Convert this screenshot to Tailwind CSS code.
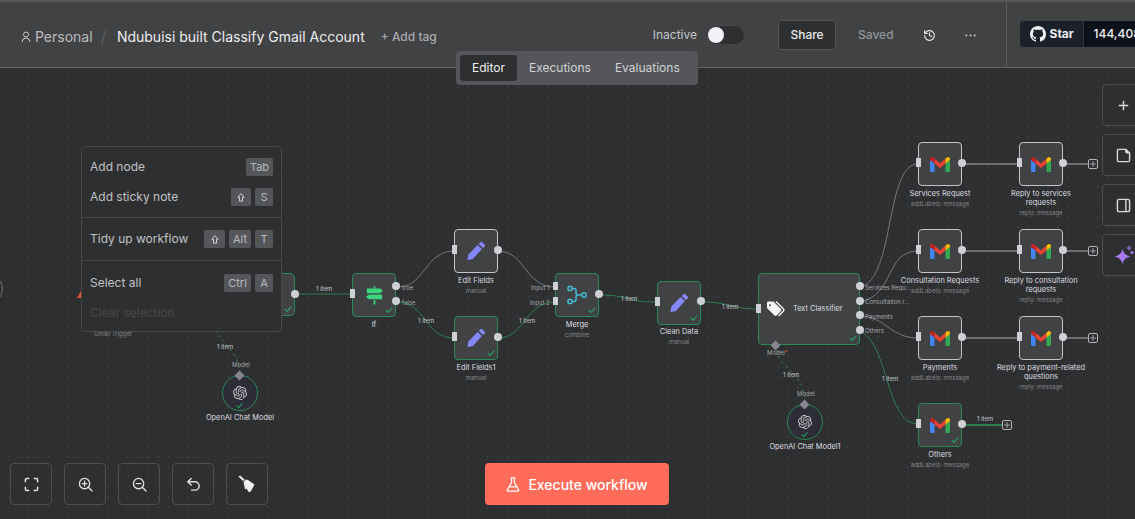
<!DOCTYPE html>
<html>
<head>
<meta charset="utf-8">
<script src="https://cdn.jsdelivr.net/npm/@tailwindcss/browser@4"></script>
</head>
<body class="m-0 overflow-hidden bg-[#2e2f30] font-['Inter','Liberation_Sans',sans-serif]">
<div class="relative w-[1135px] h-[519px] overflow-hidden flex flex-col">

<header class="h-[68px] shrink-0 bg-[#414244] border-t-2 border-t-[#575859] border-b border-b-[#626365] flex items-center pl-[21px] pt-[4px] text-[#c8cacd] whitespace-nowrap overflow-hidden">
  <svg class="w-[10px] h-[12px] mr-[4px] shrink-0" viewBox="0 0 20 24" fill="none" stroke="#c4c6c9" stroke-width="2"><circle cx="10" cy="7" r="5"/><path d="M2 22a8 8 0 0 1 16 0"/></svg>
  <span class="text-[14px] text-[#b9bbbf] shrink-0">Personal</span>
  <span class="text-[18px] text-[#5c5d60] ml-[8px] mr-[10px] font-light shrink-0">/</span>
  <span class="text-[14px] text-[#eceef0] shrink-0">Ndubuisi built Classify Gmail Account</span>
  <span class="text-[12px] text-[#a9abb0] font-medium ml-[16px] shrink-0">+ Add tag</span>
  <span class="text-[12px] text-[#c4c6c9] ml-[216px] -mt-[3px] shrink-0">Inactive</span>
  <div class="ml-[10px] -mt-[3px] w-[38px] h-[20px] rounded-full bg-[#2e2f30] border border-[#45464a] relative shrink-0"><div class="absolute left-[0px] top-[1px] w-[16px] h-[16px] rounded-full bg-[#f1f1f8]"></div></div>
  <div class="ml-[33px] -mt-[3px] w-[58px] h-[30px] rounded-[4px] bg-[#2e2f30] border border-[#55565a] flex items-center justify-center text-[12px] font-medium text-[#e8e9eb] shrink-0">Share</div>
  <span class="ml-[22px] -mt-[3px] text-[12px] font-medium text-[#92949a] shrink-0">Saved</span>
  <svg class="ml-[29px] -mt-[3px] w-[13px] h-[13px] shrink-0" viewBox="0 0 24 24" fill="none" stroke="#e3e4e6" stroke-width="2.2" stroke-linecap="round" stroke-linejoin="round"><path d="M3 12a9 9 0 1 0 3-6.7L3 8"/><path d="M3 3v5h5"/><path d="M12 7v5l4 2"/></svg>
  <svg class="ml-[29px] -mt-[3px] w-[11px] h-[11px] shrink-0" viewBox="0 0 12 12" fill="#c8cacd"><circle cx="1.5" cy="6" r="1.1"/><circle cx="6" cy="6" r="1.1"/><circle cx="10.5" cy="6" r="1.1"/></svg>
  <div class="ml-[30px] w-px self-stretch -mt-[4px] bg-[#5c5d60] shrink-0"></div>
  <div class="ml-[13px] flex h-[26px] rounded-[3px] overflow-hidden text-[12px] font-bold text-[#f0f1f3] -mt-[5px] shrink-0">
    <div class="w-[64px] bg-[#1a212b] flex items-center pl-[10px] gap-[4px] border-r border-[#30363d]">
      <svg class="w-[16px] h-[16px] shrink-0" viewBox="0 0 16 16" fill="#f0f1f3"><path d="M8 0C3.58 0 0 3.58 0 8c0 3.54 2.29 6.53 5.47 7.59.4.07.55-.17.55-.38 0-.19-.01-.82-.01-1.49-2.01.37-2.53-.49-2.69-.94-.09-.23-.48-.94-.82-1.13-.28-.15-.68-.52-.01-.53.63-.01 1.08.58 1.23.82.72 1.21 1.87.87 2.33.66.07-.52.28-.87.51-1.07-1.78-.2-3.64-.89-3.64-3.95 0-.87.31-1.59.82-2.15-.08-.2-.36-1.02.08-2.12 0 0 .67-.21 2.2.82.64-.18 1.32-.27 2-.27s1.36.09 2 .27c1.53-1.04 2.2-.82 2.2-.82.44 1.1.16 1.92.08 2.12.51.56.82 1.27.82 2.15 0 3.07-1.87 3.75-3.65 3.95.29.25.54.73.54 1.48 0 1.07-.01 1.93-.01 2.2 0 .21.15.46.55.38A8.01 8.01 0 0 0 16 8c0-4.42-3.58-8-8-8z"/></svg>Star
    </div>
    <div class="w-[70px] bg-[#0d1119] flex items-center pl-[10px] font-medium">144,408</div>
  </div>
</header>

<!-- canvas -->
<main class="relative flex-1 bg-[#2e2f30] bg-[radial-gradient(circle,#46474a_0.6px,transparent_0.8px)] bg-[length:10px_10px] bg-[position:3px_4px]">

  <!-- tab switcher -->
  <div class="absolute left-[456px] top-[-17px] h-[34px] w-[242px] rounded-[4px] bg-[#55565a] flex items-center pl-[4px] text-[12px] text-[#d0d2d6] z-20">
    <div class="w-[57px] h-[26px] rounded-[4px] bg-[#2e2f30] text-[#f0f1f3] flex items-center justify-center">Editor</div>
    <span class="ml-[12px]">Executions</span>
    <span class="ml-[24px]">Evaluations</span>
  </div>

  <!-- connections -->
  <svg class="absolute left-0 top-0" width="1135" height="451" viewBox="0 68 1135 451" fill="none">
    <path d="M0 281C3 285 3 293 0 297" stroke="#77787b"/>
    <g stroke="#2f7d50" stroke-width="1">
      <path d="M295 294H352"/>
      <path d="M398 302C425 302 425 338 454 338"/>
      <path d="M498 338C525 338 525 302 555 302"/>
      <path d="M599 295C630 295 625 302 657 302"/>
      <path d="M701 302C730 302 730 309 758 309"/>
      <path d="M860 331C890 345 885 424 918 424"/>
      <path d="M776 344C776 370 805 370 805 402" stroke-dasharray="3 3"/>
      <path d="M215 330C225 345 240 355 240 375" stroke-dasharray="3 3"/>
      <path d="M961 425H1002" stroke-width="2"/>
    </g>
    <g stroke="#77787b" stroke-width="1">
      <path d="M398 287C425 287 425 251 454 251"/>
      <path d="M498 251C525 251 525 287 555 287"/>
      <path d="M860 287C895 280 885 164 918 164"/>
      <path d="M860 302C895 295 885 251 918 251"/>
      <path d="M860 316C885 316 890 338 918 338"/>
    </g>
    <g stroke="#6d6e71" stroke-width="2">
      <path d="M961 164H1019"/><path d="M961 251H1019"/><path d="M961 338H1019"/>
      <path d="M1062 164H1088"/><path d="M1062 251H1088"/><path d="M1062 338H1088"/>
    </g>
  </svg>

  <!-- trigger remains -->
  <div class="absolute left-[265px] top-[205px] w-[30px] h-[43px] rounded-r-[5px] bg-[#414244] border-[1.5px] border-l-0 border-[#2a8a57]">
    <svg class="absolute right-[2px] bottom-[2px] w-[8px] h-[8px]" viewBox="0 0 10 10" fill="none" stroke="#2a9a5f" stroke-width="1.5"><path d="M1 5l3 3 5-6"/></svg>
  </div>
  <div class="absolute left-[291px] top-[222px] w-[8px] h-[8px] rounded-full bg-[#cfd0d6]"></div>
  <svg class="absolute left-[77px] top-[221px] w-[5px] h-[9px]" viewBox="0 0 5 9" fill="#e0533f"><path d="M5 0v9H0z"/></svg>
  <div class="absolute left-[94px] top-[261px] text-[6px] text-[#85878b]">Gmail Trigger</div>

  <!-- edge labels -->
  <div class="text-[6px] text-[#c4c6c9]">
    <span class="absolute left-[316px] top-[216px]">1 item</span>
    <span class="absolute left-[418px] top-[248px]">1 item</span>
    <span class="absolute left-[519px] top-[248px]">1 item</span>
    <span class="absolute left-[621px] top-[226px]">1 item</span>
    <span class="absolute left-[722px] top-[234px]">1 item</span>
    <span class="absolute left-[217px] top-[274px]">1 item</span>
    <span class="absolute left-[783px] top-[302px]">1 item</span>
    <span class="absolute left-[882px] top-[306px]">1 item</span>
    <span class="absolute left-[977px] top-[346px]">1 item</span>
    <span class="absolute left-[402px] top-[215px] text-[#a5a7ab]">true</span>
    <span class="absolute left-[402px] top-[230px] text-[#a5a7ab]">false</span>
    <span class="absolute left-[531px] top-[215px] text-[#a5a7ab]">Input 1</span>
    <span class="absolute left-[530px] top-[230px] text-[#a5a7ab]">Input 2</span>
    <span class="absolute left-[865px] top-[215px] text-[#a5a7ab]">Services Requ...</span>
    <span class="absolute left-[865px] top-[229px] text-[#a5a7ab]">Consultation r...</span>
    <span class="absolute left-[865px] top-[244px] text-[#a5a7ab]">Payments</span>
    <span class="absolute left-[865px] top-[258px] text-[#a5a7ab]">Others</span>
    <span class="absolute left-[767px] top-[280px] text-[#a5a7ab]">Model<span class="text-[#e0533f]">*</span></span>
    <span class="absolute left-[797px] top-[321px] text-[#a5a7ab]">Model</span>
    <span class="absolute left-[232px] top-[292px] text-[#a5a7ab]">Model</span>
  </div>

  <!-- If node -->
  <div class="absolute left-[352px] top-[205px] w-[44px] h-[44px] rounded-[4px] bg-[#414244] border-[1.5px] border-[#2a8a57] flex items-center justify-center">
    <svg class="w-[19px] h-[19px]" viewBox="0 0 20 20" fill="#3bd57d"><path d="M9 0.500h2v2H9zM9 15h2v4.500H9z"/><path d="M2 2.500h14l3 2.500-3 2.500H2z"/><path d="M18 9H4L1 11.500 4 14h14z"/></svg>
    <svg class="absolute right-[2px] bottom-[2px] w-[8px] h-[8px]" viewBox="0 0 10 10" fill="none" stroke="#2a9a5f" stroke-width="1.5"><path d="M1 5l3 3 5-6"/></svg>
    <div class="absolute -left-[3px] top-[15px] w-[5px] h-[9px] bg-[#cfd0d6]"></div>
    <div class="absolute -right-[5px] top-[8px] w-[8px] h-[8px] rounded-full bg-[#cfd0d6]"></div>
    <div class="absolute -right-[5px] top-[23px] w-[8px] h-[8px] rounded-full bg-[#cfd0d6]"></div>
  </div>
  <div class="absolute left-[352px] top-[251px] w-[44px] text-center text-[7.4px] text-[#dcdde0]">If</div>

  <!-- Edit Fields -->
  <div class="absolute left-[454px] top-[161px] w-[44px] h-[44px] rounded-[4px] bg-[#414244] border-[1.5px] border-[#c4c5c9] flex items-center justify-center">
    <svg class="w-[20px] h-[20px]" viewBox="0 0 20 20" fill="#8587f7"><path d="M14.500 1.200a1.200 1.200 0 0 1 1.600 0l2.700 2.500a1.200 1.200 0 0 1 0 1.600L17 7l-4.300-4z"/><path d="M11.500 4l4.400 4-9 10-5.500 1.200 1-5.700z"/></svg>
    <div class="absolute -left-[3px] top-[15px] w-[5px] h-[9px] bg-[#cfd0d6]"></div>
    <div class="absolute -right-[5px] top-[16px] w-[8px] h-[8px] rounded-full bg-[#cfd0d6]"></div>
  </div>
  <div class="absolute left-[436px] top-[207px] w-[80px] text-center text-[7.4px] text-[#dcdde0]">Edit Fields</div>
  <div class="absolute left-[436px] top-[218px] w-[80px] text-center text-[6px] text-[#85878b]">manual</div>

  <!-- Edit Fields1 -->
  <div class="absolute left-[454px] top-[248px] w-[44px] h-[44px] rounded-[4px] bg-[#414244] border-[1.5px] border-[#2a8a57] flex items-center justify-center">
    <svg class="w-[20px] h-[20px]" viewBox="0 0 20 20" fill="#8587f7"><path d="M14.500 1.200a1.200 1.200 0 0 1 1.600 0l2.700 2.500a1.200 1.200 0 0 1 0 1.600L17 7l-4.300-4z"/><path d="M11.500 4l4.400 4-9 10-5.500 1.200 1-5.700z"/></svg>
    <svg class="absolute right-[2px] bottom-[2px] w-[8px] h-[8px]" viewBox="0 0 10 10" fill="none" stroke="#2a9a5f" stroke-width="1.5"><path d="M1 5l3 3 5-6"/></svg>
    <div class="absolute -left-[3px] top-[15px] w-[5px] h-[9px] bg-[#cfd0d6]"></div>
    <div class="absolute -right-[5px] top-[16px] w-[8px] h-[8px] rounded-full bg-[#cfd0d6]"></div>
  </div>
  <div class="absolute left-[436px] top-[294px] w-[80px] text-center text-[7.4px] text-[#dcdde0]">Edit Fields1</div>
  <div class="absolute left-[436px] top-[305px] w-[80px] text-center text-[6px] text-[#85878b]">manual</div>

  <!-- Merge -->
  <div class="absolute left-[555px] top-[205px] w-[44px] h-[44px] rounded-[4px] bg-[#414244] border-[1.5px] border-[#2a8a57] flex items-center justify-center">
    <svg class="w-[20px] h-[20px]" viewBox="0 0 20 20" fill="none" stroke="#46bcd6" stroke-width="1.5"><rect x="1" y="1.500" width="4" height="4" rx="1"/><rect x="1" y="14.500" width="4" height="4" rx="1"/><rect x="15" y="8" width="4" height="4" rx="1"/><path d="M5 3.500H7a2 2 0 0 1 2 2V8a2 2 0 0 0 2 2h4M5 16.500H7a2 2 0 0 0 2-2V12a2 2 0 0 1 2-2"/></svg>
    <svg class="absolute right-[2px] bottom-[2px] w-[8px] h-[8px]" viewBox="0 0 10 10" fill="none" stroke="#2a9a5f" stroke-width="1.5"><path d="M1 5l3 3 5-6"/></svg>
    <div class="absolute -left-[3px] top-[8px] w-[5px] h-[8px] bg-[#cfd0d6]"></div>
    <div class="absolute -left-[3px] top-[23px] w-[5px] h-[8px] bg-[#cfd0d6]"></div>
    <div class="absolute -right-[5px] top-[16px] w-[8px] h-[8px] rounded-full bg-[#cfd0d6]"></div>
  </div>
  <div class="absolute left-[537px] top-[251px] w-[80px] text-center text-[7.4px] text-[#dcdde0]">Merge</div>
  <div class="absolute left-[537px] top-[262px] w-[80px] text-center text-[6px] text-[#85878b]">combine</div>

  <!-- Clean Data -->
  <div class="absolute left-[657px] top-[213px] w-[44px] h-[44px] rounded-[4px] bg-[#414244] border-[1.5px] border-[#2a8a57] flex items-center justify-center">
    <svg class="w-[20px] h-[20px]" viewBox="0 0 20 20" fill="#8587f7"><path d="M14.500 1.200a1.200 1.200 0 0 1 1.600 0l2.700 2.500a1.200 1.200 0 0 1 0 1.600L17 7l-4.300-4z"/><path d="M11.500 4l4.400 4-9 10-5.500 1.200 1-5.700z"/></svg>
    <svg class="absolute right-[2px] bottom-[2px] w-[8px] h-[8px]" viewBox="0 0 10 10" fill="none" stroke="#2a9a5f" stroke-width="1.5"><path d="M1 5l3 3 5-6"/></svg>
    <div class="absolute -left-[3px] top-[15px] w-[5px] h-[9px] bg-[#cfd0d6]"></div>
    <div class="absolute -right-[5px] top-[15px] w-[8px] h-[8px] rounded-full bg-[#cfd0d6]"></div>
  </div>
  <div class="absolute left-[639px] top-[258px] w-[80px] text-center text-[7.4px] text-[#dcdde0]">Clean Data</div>
  <div class="absolute left-[639px] top-[269px] w-[80px] text-center text-[6px] text-[#85878b]">manual</div>

  <!-- Text Classifier -->
  <div class="absolute left-[758px] top-[205px] w-[102px] h-[72px] rounded-[4px] bg-[#414244] border-[1.5px] border-[#2a8a57] flex items-center pl-[8px]">
    <svg class="w-[19px] h-[16px] shrink-0" viewBox="0 0 19 16" fill="#f5f5f7"><path d="M0 1.500V7l7.500 7.500a1.500 1.500 0 0 0 2 0L14 10a1.500 1.500 0 0 0 0-2L6.500.5H1A1 1 0 0 0 0 1.500zM3 3.200a1 1 0 1 1 0 2 1 1 0 0 1 0-2z" fill-rule="evenodd"/><path d="M9 .5l7.500 7.500a1.500 1.500 0 0 1 0 2L11.500 15" fill="none" stroke="#f5f5f7" stroke-width="1.400"/></svg>
    <span class="ml-[7px] text-[7.4px] text-[#dcdde0]">Text Classifier</span>
    <svg class="absolute right-[2px] bottom-[2px] w-[8px] h-[8px]" viewBox="0 0 10 10" fill="none" stroke="#2a9a5f" stroke-width="1.5"><path d="M1 5l3 3 5-6"/></svg>
    <div class="absolute -left-[3px] top-[30px] w-[5px] h-[9px] bg-[#cfd0d6]"></div>
    <div class="absolute -right-[5px] top-[8px] w-[8px] h-[8px] rounded-full bg-[#cfd0d6]"></div>
    <div class="absolute -right-[5px] top-[23px] w-[8px] h-[8px] rounded-full bg-[#cfd0d6]"></div>
    <div class="absolute -right-[5px] top-[37px] w-[8px] h-[8px] rounded-full bg-[#cfd0d6]"></div>
    <div class="absolute -right-[5px] top-[52px] w-[8px] h-[8px] rounded-full bg-[#cfd0d6]"></div>
    <div class="absolute left-[13px] -bottom-[5px] w-[7px] h-[7px] rotate-45 bg-[#85868f]"></div>
  </div>

  <!-- OpenAI chat 1 -->
  <div class="absolute left-[787px] top-[336px] w-[36px] h-[36px] rounded-full bg-[#2c2d36] border-[1.5px] border-[#2a8a57] flex items-center justify-center">
    <svg class="w-[14px] h-[14px]" viewBox="0 0 24 24" fill="#c4c6c9"><path d="M22.2819 9.8211a5.9847 5.9847 0 0 0-.5157-4.9108 6.0462 6.0462 0 0 0-6.5098-2.9A6.0651 6.0651 0 0 0 4.9807 4.1818a5.9847 5.9847 0 0 0-3.9977 2.9 6.0462 6.0462 0 0 0 .7427 7.0966 5.98 5.98 0 0 0 .511 4.9107 6.051 6.051 0 0 0 6.5146 2.9001A5.9847 5.9847 0 0 0 13.2599 24a6.0557 6.0557 0 0 0 5.7718-4.2058 5.9894 5.9894 0 0 0 3.9977-2.9001 6.0557 6.0557 0 0 0-.7475-7.0729zm-9.022 12.6081a4.4755 4.4755 0 0 1-2.8764-1.0408l.1419-.0804 4.7783-2.7582a.7948.7948 0 0 0 .3927-.6813v-6.7369l2.02 1.1686a.071.071 0 0 1 .038.052v5.5826a4.504 4.504 0 0 1-4.4945 4.4944zm-9.6607-4.1254a4.4708 4.4708 0 0 1-.5346-3.0137l.142.0852 4.783 2.7582a.7712.7712 0 0 0 .7806 0l5.8428-3.3685v2.3324a.0804.0804 0 0 1-.0332.0615L9.74 19.9502a4.4992 4.4992 0 0 1-6.1408-1.6464zM2.3408 7.8956a4.485 4.485 0 0 1 2.3655-1.9728V11.6a.7664.7664 0 0 0 .3879.6765l5.8144 3.3543-2.0201 1.1685a.0757.0757 0 0 1-.071 0l-4.8303-2.7865A4.504 4.504 0 0 1 2.3408 7.872zm16.5963 3.8558L13.1038 8.364 15.1192 7.2a.0757.0757 0 0 1 .071 0l4.8303 2.7913a4.4944 4.4944 0 0 1-.6765 8.1042v-5.6772a.79.79 0 0 0-.407-.667zm2.0107-3.0231l-.142-.0852-4.7735-2.7818a.7759.7759 0 0 0-.7854 0L9.409 9.2297V6.8974a.0662.0662 0 0 1 .0284-.0615l4.8303-2.7866a4.4992 4.4992 0 0 1 6.6802 4.66zM8.3065 12.863l-2.02-1.1638a.0804.0804 0 0 1-.038-.0567V6.0742a4.4992 4.4992 0 0 1 7.3757-3.4537l-.142.0805L8.704 5.459a.7948.7948 0 0 0-.3927.6813zm1.0976-2.3654l2.602-1.4998 2.6069 1.4998v2.9994l-2.5974 1.4997-2.6067-1.4997Z"/></svg>
    <svg class="absolute left-[13px] bottom-[1px] w-[7px] h-[7px]" viewBox="0 0 10 10" fill="none" stroke="#2a9a5f" stroke-width="1.500"><path d="M1 5l3 3 5-6"/></svg>
    <div class="absolute left-[13px] -top-[4px] w-[7px] h-[7px] rotate-45 bg-[#85868f]"></div>
  </div>
  <div class="absolute left-[755px] top-[373px] w-[100px] text-center text-[7.4px] text-[#dcdde0]">OpenAI Chat Model1</div>

  <!-- OpenAI chat -->
  <div class="absolute left-[222px] top-[307px] w-[36px] h-[36px] rounded-full bg-[#2c2d36] border-[1.5px] border-[#2a8a57] flex items-center justify-center">
    <svg class="w-[14px] h-[14px]" viewBox="0 0 24 24" fill="#c4c6c9"><path d="M22.2819 9.8211a5.9847 5.9847 0 0 0-.5157-4.9108 6.0462 6.0462 0 0 0-6.5098-2.9A6.0651 6.0651 0 0 0 4.9807 4.1818a5.9847 5.9847 0 0 0-3.9977 2.9 6.0462 6.0462 0 0 0 .7427 7.0966 5.98 5.98 0 0 0 .511 4.9107 6.051 6.051 0 0 0 6.5146 2.9001A5.9847 5.9847 0 0 0 13.2599 24a6.0557 6.0557 0 0 0 5.7718-4.2058 5.9894 5.9894 0 0 0 3.9977-2.9001 6.0557 6.0557 0 0 0-.7475-7.0729zm-9.022 12.6081a4.4755 4.4755 0 0 1-2.8764-1.0408l.1419-.0804 4.7783-2.7582a.7948.7948 0 0 0 .3927-.6813v-6.7369l2.02 1.1686a.071.071 0 0 1 .038.052v5.5826a4.504 4.504 0 0 1-4.4945 4.4944zm-9.6607-4.1254a4.4708 4.4708 0 0 1-.5346-3.0137l.142.0852 4.783 2.7582a.7712.7712 0 0 0 .7806 0l5.8428-3.3685v2.3324a.0804.0804 0 0 1-.0332.0615L9.74 19.9502a4.4992 4.4992 0 0 1-6.1408-1.6464zM2.3408 7.8956a4.485 4.485 0 0 1 2.3655-1.9728V11.6a.7664.7664 0 0 0 .3879.6765l5.8144 3.3543-2.0201 1.1685a.0757.0757 0 0 1-.071 0l-4.8303-2.7865A4.504 4.504 0 0 1 2.3408 7.872zm16.5963 3.8558L13.1038 8.364 15.1192 7.2a.0757.0757 0 0 1 .071 0l4.8303 2.7913a4.4944 4.4944 0 0 1-.6765 8.1042v-5.6772a.79.79 0 0 0-.407-.667zm2.0107-3.0231l-.142-.0852-4.7735-2.7818a.7759.7759 0 0 0-.7854 0L9.409 9.2297V6.8974a.0662.0662 0 0 1 .0284-.0615l4.8303-2.7866a4.4992 4.4992 0 0 1 6.6802 4.66zM8.3065 12.863l-2.02-1.1638a.0804.0804 0 0 1-.038-.0567V6.0742a4.4992 4.4992 0 0 1 7.3757-3.4537l-.142.0805L8.704 5.459a.7948.7948 0 0 0-.3927.6813zm1.0976-2.3654l2.602-1.4998 2.6069 1.4998v2.9994l-2.5974 1.4997-2.6067-1.4997Z"/></svg>
    <svg class="absolute left-[13px] bottom-[1px] w-[7px] h-[7px]" viewBox="0 0 10 10" fill="none" stroke="#2a9a5f" stroke-width="1.500"><path d="M1 5l3 3 5-6"/></svg>
    <div class="absolute left-[13px] -top-[4px] w-[7px] h-[7px] rotate-45 bg-[#85868f]"></div>
  </div>
  <div class="absolute left-[190px] top-[344px] w-[100px] text-center text-[7.4px] text-[#dcdde0]">OpenAI Chat Model</div>

  <!-- Gmail nodes -->
  <div class="absolute left-[918px] top-[74px] w-[44px] h-[44px] rounded-[4px] bg-[#414244] border-[1.5px] border-[#c4c5c9] flex items-center justify-center">
    <svg class="w-[20px] h-[15px]" viewBox="0 0 20 15"><path d="M0 3v10.500A1.500 1.500 0 0 0 1.500 15H4.500V6z" fill="#4285f4"/><path d="M15.500 6v9h3A1.500 1.500 0 0 0 20 13.500V3z" fill="#34a853"/><path d="M4.500 1.500L10 6.500l5.500-5v5L10 11 4.500 6.500z" fill="#ea4335"/><path d="M15.500 1.500V6.500L20 3V2c0-1.500-1.800-2.500-3-1.500z" fill="#fbbc04"/><path d="M0 2c0-1.500 1.800-2.500 3-1.500L4.500 1.500V6.500L0 3z" fill="#c5221f"/></svg>
    <div class="absolute -left-[3px] top-[15px] w-[5px] h-[9px] bg-[#cfd0d6]"></div>
    <div class="absolute -right-[5px] top-[16px] w-[8px] h-[8px] rounded-full bg-[#cfd0d6]"></div>
  </div>
  <div class="absolute left-[890px] top-[120px] w-[100px] text-center text-[7.4px] text-[#dcdde0]">Services Request</div>
  <div class="absolute left-[890px] top-[131px] w-[100px] text-center text-[6px] text-[#85878b]">addLabels: message</div>

  <div class="absolute left-[1019px] top-[74px] w-[44px] h-[44px] rounded-[4px] bg-[#414244] border-[1.5px] border-[#c4c5c9] flex items-center justify-center">
    <svg class="w-[20px] h-[15px]" viewBox="0 0 20 15"><path d="M0 3v10.500A1.500 1.500 0 0 0 1.500 15H4.500V6z" fill="#4285f4"/><path d="M15.500 6v9h3A1.500 1.500 0 0 0 20 13.500V3z" fill="#34a853"/><path d="M4.500 1.500L10 6.500l5.500-5v5L10 11 4.500 6.500z" fill="#ea4335"/><path d="M15.500 1.500V6.500L20 3V2c0-1.500-1.800-2.500-3-1.500z" fill="#fbbc04"/><path d="M0 2c0-1.500 1.800-2.500 3-1.500L4.500 1.500V6.500L0 3z" fill="#c5221f"/></svg>
    <div class="absolute -left-[3px] top-[15px] w-[5px] h-[9px] bg-[#cfd0d6]"></div>
    <div class="absolute -right-[5px] top-[16px] w-[8px] h-[8px] rounded-full bg-[#cfd0d6]"></div>
  </div>
  <div class="absolute left-[991px] top-[121px] w-[100px] text-center text-[7.4px] leading-[9px] text-[#dcdde0]">Reply to services<br>requests</div>
  <div class="absolute left-[991px] top-[140px] w-[100px] text-center text-[6px] text-[#85878b]">reply: message</div>

  <div class="absolute left-[918px] top-[161px] w-[44px] h-[44px] rounded-[4px] bg-[#414244] border-[1.5px] border-[#c4c5c9] flex items-center justify-center">
    <svg class="w-[20px] h-[15px]" viewBox="0 0 20 15"><path d="M0 3v10.500A1.500 1.500 0 0 0 1.500 15H4.500V6z" fill="#4285f4"/><path d="M15.500 6v9h3A1.500 1.500 0 0 0 20 13.500V3z" fill="#34a853"/><path d="M4.500 1.500L10 6.500l5.500-5v5L10 11 4.500 6.500z" fill="#ea4335"/><path d="M15.500 1.500V6.500L20 3V2c0-1.500-1.800-2.500-3-1.500z" fill="#fbbc04"/><path d="M0 2c0-1.500 1.800-2.500 3-1.500L4.500 1.500V6.500L0 3z" fill="#c5221f"/></svg>
    <div class="absolute -left-[3px] top-[15px] w-[5px] h-[9px] bg-[#cfd0d6]"></div>
    <div class="absolute -right-[5px] top-[16px] w-[8px] h-[8px] rounded-full bg-[#cfd0d6]"></div>
  </div>
  <div class="absolute left-[890px] top-[207px] w-[100px] text-center text-[7.4px] text-[#dcdde0]">Consultation Requests</div>
  <div class="absolute left-[890px] top-[218px] w-[100px] text-center text-[6px] text-[#85878b]">addLabels: message</div>

  <div class="absolute left-[1019px] top-[161px] w-[44px] h-[44px] rounded-[4px] bg-[#414244] border-[1.5px] border-[#c4c5c9] flex items-center justify-center">
    <svg class="w-[20px] h-[15px]" viewBox="0 0 20 15"><path d="M0 3v10.500A1.500 1.500 0 0 0 1.500 15H4.500V6z" fill="#4285f4"/><path d="M15.500 6v9h3A1.500 1.500 0 0 0 20 13.500V3z" fill="#34a853"/><path d="M4.500 1.500L10 6.500l5.500-5v5L10 11 4.500 6.500z" fill="#ea4335"/><path d="M15.500 1.500V6.500L20 3V2c0-1.500-1.800-2.500-3-1.500z" fill="#fbbc04"/><path d="M0 2c0-1.500 1.800-2.500 3-1.500L4.500 1.500V6.500L0 3z" fill="#c5221f"/></svg>
    <div class="absolute -left-[3px] top-[15px] w-[5px] h-[9px] bg-[#cfd0d6]"></div>
    <div class="absolute -right-[5px] top-[16px] w-[8px] h-[8px] rounded-full bg-[#cfd0d6]"></div>
  </div>
  <div class="absolute left-[991px] top-[208px] w-[100px] text-center text-[7.4px] leading-[9px] text-[#dcdde0]">Reply to consultation<br>requests</div>
  <div class="absolute left-[991px] top-[227px] w-[100px] text-center text-[6px] text-[#85878b]">reply: message</div>

  <div class="absolute left-[918px] top-[248px] w-[44px] h-[44px] rounded-[4px] bg-[#414244] border-[1.5px] border-[#c4c5c9] flex items-center justify-center">
    <svg class="w-[20px] h-[15px]" viewBox="0 0 20 15"><path d="M0 3v10.500A1.500 1.500 0 0 0 1.500 15H4.500V6z" fill="#4285f4"/><path d="M15.500 6v9h3A1.500 1.500 0 0 0 20 13.500V3z" fill="#34a853"/><path d="M4.500 1.500L10 6.500l5.500-5v5L10 11 4.500 6.500z" fill="#ea4335"/><path d="M15.500 1.500V6.500L20 3V2c0-1.500-1.800-2.500-3-1.500z" fill="#fbbc04"/><path d="M0 2c0-1.500 1.800-2.500 3-1.500L4.500 1.500V6.500L0 3z" fill="#c5221f"/></svg>
    <div class="absolute -left-[3px] top-[15px] w-[5px] h-[9px] bg-[#cfd0d6]"></div>
    <div class="absolute -right-[5px] top-[16px] w-[8px] h-[8px] rounded-full bg-[#cfd0d6]"></div>
  </div>
  <div class="absolute left-[890px] top-[294px] w-[100px] text-center text-[7.4px] text-[#dcdde0]">Payments</div>
  <div class="absolute left-[890px] top-[305px] w-[100px] text-center text-[6px] text-[#85878b]">addLabels: message</div>

  <div class="absolute left-[1019px] top-[248px] w-[44px] h-[44px] rounded-[4px] bg-[#414244] border-[1.5px] border-[#c4c5c9] flex items-center justify-center">
    <svg class="w-[20px] h-[15px]" viewBox="0 0 20 15"><path d="M0 3v10.500A1.500 1.500 0 0 0 1.500 15H4.500V6z" fill="#4285f4"/><path d="M15.500 6v9h3A1.500 1.500 0 0 0 20 13.500V3z" fill="#34a853"/><path d="M4.500 1.500L10 6.500l5.500-5v5L10 11 4.500 6.500z" fill="#ea4335"/><path d="M15.500 1.500V6.500L20 3V2c0-1.500-1.800-2.500-3-1.500z" fill="#fbbc04"/><path d="M0 2c0-1.500 1.800-2.500 3-1.500L4.500 1.500V6.500L0 3z" fill="#c5221f"/></svg>
    <div class="absolute -left-[3px] top-[15px] w-[5px] h-[9px] bg-[#cfd0d6]"></div>
    <div class="absolute -right-[5px] top-[16px] w-[8px] h-[8px] rounded-full bg-[#cfd0d6]"></div>
  </div>
  <div class="absolute left-[981px] top-[295px] w-[120px] text-center text-[7.4px] leading-[9px] text-[#dcdde0]">Reply to payment-related<br>questions</div>
  <div class="absolute left-[991px] top-[314px] w-[100px] text-center text-[6px] text-[#85878b]">reply: message</div>

  <div class="absolute left-[918px] top-[335px] w-[44px] h-[44px] rounded-[4px] bg-[#414244] border-[1.5px] border-[#2a8a57] flex items-center justify-center">
    <svg class="w-[20px] h-[15px]" viewBox="0 0 20 15"><path d="M0 3v10.500A1.500 1.500 0 0 0 1.500 15H4.500V6z" fill="#4285f4"/><path d="M15.500 6v9h3A1.500 1.500 0 0 0 20 13.500V3z" fill="#34a853"/><path d="M4.500 1.500L10 6.500l5.500-5v5L10 11 4.500 6.500z" fill="#ea4335"/><path d="M15.500 1.500V6.500L20 3V2c0-1.500-1.800-2.500-3-1.500z" fill="#fbbc04"/><path d="M0 2c0-1.500 1.800-2.500 3-1.500L4.500 1.500V6.500L0 3z" fill="#c5221f"/></svg>
    <svg class="absolute right-[2px] bottom-[2px] w-[8px] h-[8px]" viewBox="0 0 10 10" fill="none" stroke="#2a9a5f" stroke-width="1.5"><path d="M1 5l3 3 5-6"/></svg>
    <div class="absolute -left-[3px] top-[15px] w-[5px] h-[9px] bg-[#cfd0d6]"></div>
    <div class="absolute -right-[5px] top-[16px] w-[8px] h-[8px] rounded-full bg-[#cfd0d6]"></div>
  </div>
  <div class="absolute left-[890px] top-[381px] w-[100px] text-center text-[7.4px] text-[#dcdde0]">Others</div>
  <div class="absolute left-[890px] top-[392px] w-[100px] text-center text-[6px] text-[#85878b]">addLabels: message</div>

  <!-- plus boxes -->
  <div class="absolute left-[1088px] top-[91px] w-[10px] h-[10px] rounded-[2px] border border-[#b4b5b9] flex items-center justify-center"><svg class="w-[6px] h-[6px]" viewBox="0 0 6 6" stroke="#a0a1a5"><path d="M3 0v6M0 3h6"/></svg></div>
  <div class="absolute left-[1088px] top-[178px] w-[10px] h-[10px] rounded-[2px] border border-[#b4b5b9] flex items-center justify-center"><svg class="w-[6px] h-[6px]" viewBox="0 0 6 6" stroke="#a0a1a5"><path d="M3 0v6M0 3h6"/></svg></div>
  <div class="absolute left-[1088px] top-[265px] w-[10px] h-[10px] rounded-[2px] border border-[#b4b5b9] flex items-center justify-center"><svg class="w-[6px] h-[6px]" viewBox="0 0 6 6" stroke="#a0a1a5"><path d="M3 0v6M0 3h6"/></svg></div>
  <div class="absolute left-[1002px] top-[352px] w-[10px] h-[10px] rounded-[2px] border border-[#b4b5b9] flex items-center justify-center"><svg class="w-[6px] h-[6px]" viewBox="0 0 6 6" stroke="#a0a1a5"><path d="M3 0v6M0 3h6"/></svg></div>

  <!-- context menu -->
  <div class="absolute left-[81px] top-[78px] w-[201px] h-[186px] rounded-[4px] bg-[#2e2f30] border border-[#47484a] text-[12px] text-[#c0c2c6] z-10">
    <div class="h-[30px] mt-[5px] flex items-center justify-between px-[8px]"><span>Add node</span><kbd class="h-[18px] w-[27px] bg-[#55565a] rounded-[2px] flex items-center justify-center text-[11px] text-[#b8babe] font-['Inter']">Tab</kbd></div>
    <div class="h-[30px] flex items-center px-[8px]"><span class="flex-1">Add sticky note</span><kbd class="h-[18px] w-[20px] bg-[#55565a] rounded-[2px] flex items-center justify-center"><svg class="w-[8px] h-[9px]" viewBox="0 0 8 9" fill="none" stroke="#d0d2d6"><path d="M4 .7L.8 4.300h1.700v3.800h3V4.300h1.700z"/></svg></kbd><kbd class="ml-[4px] h-[18px] w-[18px] bg-[#55565a] rounded-[2px] flex items-center justify-center text-[11px] text-[#b8babe] font-['Inter']">S</kbd></div>
    <div class="h-px bg-[#47484a] mt-[5px]"></div>
    <div class="h-[42px] flex items-center px-[8px]"><span class="flex-1">Tidy up workflow</span><kbd class="h-[18px] w-[21px] bg-[#55565a] rounded-[2px] flex items-center justify-center"><svg class="w-[8px] h-[9px]" viewBox="0 0 8 9" fill="none" stroke="#d0d2d6"><path d="M4 .7L.8 4.300h1.700v3.800h3V4.300h1.700z"/></svg></kbd><kbd class="ml-[4px] h-[18px] w-[22px] bg-[#55565a] rounded-[2px] flex items-center justify-center text-[11px] text-[#b8babe] font-['Inter']">Alt</kbd><kbd class="ml-[4px] h-[18px] w-[18px] bg-[#55565a] rounded-[2px] flex items-center justify-center text-[11px] text-[#b8babe] font-['Inter']">T</kbd></div>
    <div class="h-px bg-[#47484a]"></div>
    <div class="h-[30px] mt-[7px] flex items-center px-[8px]"><span class="flex-1">Select all</span><kbd class="h-[18px] w-[27px] bg-[#55565a] rounded-[2px] flex items-center justify-center text-[11px] text-[#b8babe] font-['Inter']">Ctrl</kbd><kbd class="ml-[4px] h-[18px] w-[18px] bg-[#55565a] rounded-[2px] flex items-center justify-center text-[11px] text-[#b8babe] font-['Inter']">A</kbd></div>
    <div class="h-[30px] flex items-center px-[8px] text-[#47484a]">Clear selection</div>
  </div>

  <!-- right toolbar -->
  <div class="absolute left-[1102px] top-[16px] flex flex-col gap-[8px] w-[50px]">
    <div class="h-[42px] rounded-[4px] border border-[#4d4e50] bg-[#2e2f30] flex items-center pl-[15px]"><svg class="w-[11px] h-[11px]" viewBox="0 0 14 14" stroke="#d8d9dc" stroke-width="1.800"><path d="M7 1v12M1 7h12"/></svg></div>
    <div class="h-[42px] rounded-[4px] border border-[#4d4e50] bg-[#2e2f30] flex items-center pl-[13px]"><svg class="w-[15px] h-[15px]" viewBox="0 0 16 16" fill="none" stroke="#d8d9dc" stroke-width="1.500"><path d="M3 1.500h7.500l4 4V13a1.500 1.500 0 0 1-1.500 1.500H3A1.500 1.500 0 0 1 1.500 13V3A1.500 1.500 0 0 1 3 1.500z"/><path d="M10.500 1.500v2.500a1 1 0 0 0 1 1h3" fill="#d8d9dc"/></svg></div>
    <div class="h-[42px] rounded-[4px] border border-[#4d4e50] bg-[#2e2f30] flex items-center pl-[13px]"><svg class="w-[15px] h-[15px]" viewBox="0 0 16 16" fill="none" stroke="#d8d9dc" stroke-width="1.500"><rect x="1.500" y="1.500" width="13" height="13" rx="2"/><path d="M10.500 1.500v13"/></svg></div>
    <div class="h-[42px] rounded-[4px] border border-[#4d4e50] bg-[#2e2f30] flex items-center pl-[11px]"><svg class="w-[20px] h-[20px]" viewBox="0 0 20 20" fill="#a879f2"><path d="M8.500 3.500C9.300 8 11 10 16.500 11.500 11 13 9.300 15 8.500 19.500 7.700 15 6 13 .5 11.500 6 10 7.700 8 8.500 3.500z"/><path d="M14.500 0.500h1v5h-1zM12.500 2.500h5v1h-5z"/><circle cx="18" cy="7.500" r="1.600"/></svg></div>
  </div>

  <!-- bottom left toolbar -->
  <div class="absolute left-[10px] bottom-[14px] flex gap-[12px]">
    <div class="w-[42px] h-[42px] rounded-[4px] border border-[#4d4e50] flex items-center justify-center"><svg class="w-[15px] h-[15px]" viewBox="0 0 16 16" fill="none" stroke="#e0e1e3" stroke-width="1.600" stroke-linecap="round"><path d="M1.500 5V3A1.500 1.500 0 0 1 3 1.500h2M11 1.500h2A1.500 1.500 0 0 1 14.500 3v2M14.500 11v2a1.500 1.500 0 0 1-1.500 1.500h-2M5 14.500H3A1.500 1.500 0 0 1 1.500 13v-2"/></svg></div>
    <div class="w-[42px] h-[42px] rounded-[4px] border border-[#4d4e50] flex items-center justify-center"><svg class="w-[15px] h-[15px]" viewBox="0 0 16 16" fill="none" stroke="#e0e1e3" stroke-width="1.400" stroke-linecap="round"><circle cx="7" cy="7" r="5.500"/><path d="M11 11l4 4M7 4.500v5M4.500 7h5"/></svg></div>
    <div class="w-[42px] h-[42px] rounded-[4px] border border-[#4d4e50] flex items-center justify-center"><svg class="w-[15px] h-[15px]" viewBox="0 0 16 16" fill="none" stroke="#e0e1e3" stroke-width="1.400" stroke-linecap="round"><circle cx="7" cy="7" r="5.500"/><path d="M11 11l4 4M4.500 7h5"/></svg></div>
    <div class="w-[42px] h-[42px] rounded-[4px] border border-[#4d4e50] flex items-center justify-center"><svg class="w-[15px] h-[15px]" viewBox="0 0 16 16" fill="none" stroke="#e0e1e3" stroke-width="1.500" stroke-linecap="round" stroke-linejoin="round"><path d="M5.500 1.500L2 5l3.500 3.500"/><path d="M2 5h7.500a4 4 0 0 1 0 9H6"/></svg></div>
    <div class="w-[42px] h-[42px] rounded-[4px] border border-[#4d4e50] flex items-center justify-center"><svg class="w-[18px] h-[18px]" viewBox="0 0 18 18" fill="#eceef0"><path d="M.5 1.500L2 .5 6.600 4.400 5 6z"/><path d="M5.500 6.500L8 4.500 10 5 16.500 9.500 13 16 11 17.500 8.500 13.500 7 14.500z"/></svg></div>
  </div>

  <!-- execute -->
  <div class="absolute left-[485px] top-[395px] w-[184px] h-[42px] rounded-[4px] bg-[#ff6d5a] flex items-center justify-center gap-[8px] text-white text-[14px] font-medium">
    <svg class="w-[14px] h-[15px]" viewBox="0 0 14 16" fill="none" stroke="#fff" stroke-width="1.300" stroke-linejoin="round"><path d="M4.500 1h5M5.500 1v5L1 13.500a1 1 0 0 0 1 1.500h10a1 1 0 0 0 1-1.500L8.500 6V1"/><path d="M3 10.500h8"/></svg>
    Execute workflow
  </div>
</main>
</div>
</body>
</html>
